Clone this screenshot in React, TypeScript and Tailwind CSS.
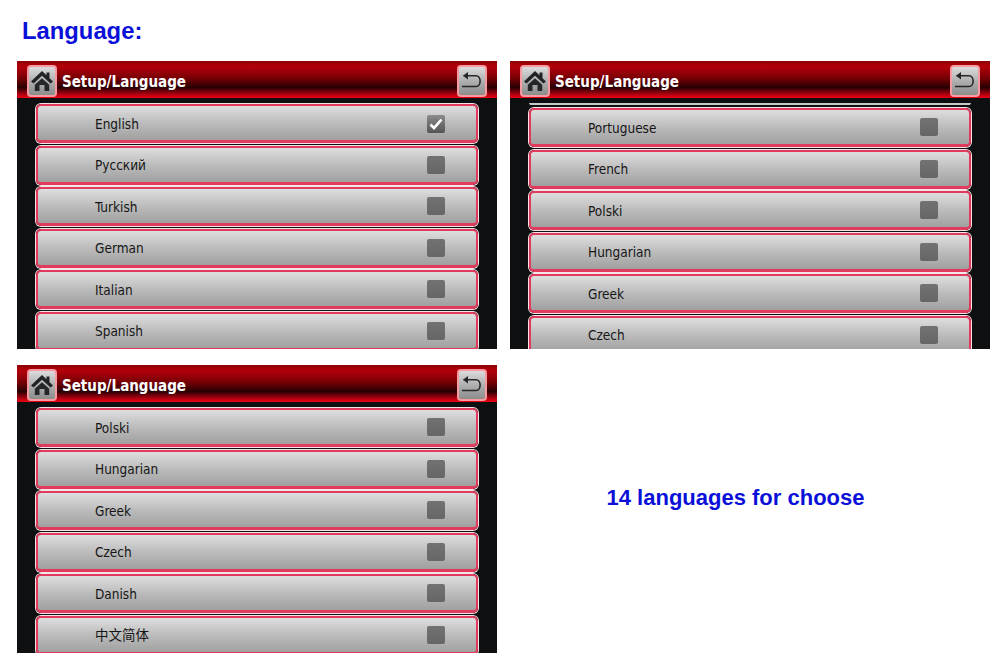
const HomeIcon = () => (
  <svg width="24" height="24" viewBox="0 0 24 24" className="block">
    <path d="M12 2 L1 12.5 L3.5 14.5 L12 6.8 L20.5 14.5 L23 12.5 L19.5 9.2 V3.5 H16.5 V6.3 Z" fill="#1f2326" />
    <path d="M4.8 15.8 L12 9.2 L19.2 15.8 V22 H14.5 V16 H9.5 V22 H4.8 Z" fill="#23272a" />
  </svg>
);

const BackIcon = () => (
  <svg width="24" height="20" viewBox="0 0 24 20" fill="none" stroke="#23272a" className="block">
    <path d="M3.5 4.8 H16 C21.5 4.8 21.5 15.5 16 15.5 H2" strokeWidth="1.6" />
    <path d="M8 1 L3 4.8 L8 8.6 Z" fill="#23272a" stroke="none" />
  </svg>
);

const IconButton = ({ children }: { children: React.ReactNode }) => (
  <div className="mt-[2px] flex h-[32px] w-[30px] shrink-0 items-center justify-center rounded-[4px] border-2 border-[#f79aa2] bg-gradient-to-b from-[#dcdcdc] via-[#b0b0b0] to-[#8c8c8c]">
    {children}
  </div>
);

const Row = ({ label, checked }: { label: string; checked?: boolean }) => (
  <div className="flex h-[39px] shrink-0 items-center rounded-[5px] border-2 border-b-[3px] border-[#e03a5c] bg-gradient-to-b from-[#dedede] via-[#bcbcbc] to-[#a0a0a0] pl-[57px] pr-[31px] text-[13.5px] text-[#161616] shadow-[0_0_0_1px_#f4e4e8] [font-stretch:condensed]">
    <span className="flex-1 pt-[2.5px] leading-none">{label}</span>
    {checked ? (
      <div className="mt-[1px] flex h-[18px] w-[18px] items-center justify-center rounded-[2px] bg-gradient-to-b from-[#8b8b8b] to-[#555555]">
        <svg width="14" height="12" viewBox="0 0 14 12" fill="none" stroke="#ffffff" strokeWidth="2.6" className="block">
          <path d="M1.5 6.5 L5 10 L12.5 1.5" />
        </svg>
      </div>
    ) : (
      <div className="h-[18px] w-[18px] rounded-[2px] bg-gradient-to-b from-[#727272] to-[#666666]" />
    )}
  </div>
);

const Panel = ({ rows, sliver }: { rows: { label: string; checked?: boolean }[]; sliver?: boolean }) => (
  <div className="flex h-[288px] w-[480px] flex-col overflow-hidden bg-[#0e0f10]">
    <div className="flex h-[37px] shrink-0 items-center bg-[linear-gradient(180deg,#8a0005_0%,#b5000a_14%,#7a0005_45%,#280002_72%,#a00010_88%,#f00014_100%)] px-[10px]">
      <IconButton><HomeIcon /></IconButton>
      <span className="ml-[5px] flex-1 pt-[5px] text-[15px] font-bold text-white [font-stretch:condensed]">Setup/Language</span>
      <IconButton><BackIcon /></IconButton>
    </div>
    <div className={`flex flex-col gap-[2.5px] overflow-hidden px-[19px] ${sliver ? "pt-[5px]" : "pt-[6px]"}`}>
      {sliver && <div className="mb-[1px] h-[1.5px] shrink-0 rounded-b-[3px] bg-[#c8c8c8]" />}
      {rows.map((r) => (
        <Row key={r.label} label={r.label} checked={r.checked} />
      ))}
    </div>
  </div>
);

const p1 = [
  { label: "English", checked: true },
  { label: "Русский" },
  { label: "Turkish" },
  { label: "German" },
  { label: "Italian" },
  { label: "Spanish" },
];
const p2 = ["Portuguese", "French", "Polski", "Hungarian", "Greek", "Czech"].map((label) => ({ label }));
const p3 = ["Polski", "Hungarian", "Greek", "Czech", "Danish", "中文简体"].map((label) => ({ label }));

export default function App() {
  return (
    <div className="h-[667px] w-[1000px] overflow-hidden bg-white pl-[17px] font-['DejaVu_Sans','Noto_Sans_CJK_SC',sans-serif]">
      <h1 className="h-[61px] pl-[5px] pt-[17px] font-['Liberation_Sans',sans-serif] text-[23.8px] font-bold leading-[28px] text-[#0a10d8]">
        Language:
      </h1>
      <div className="grid grid-cols-[480px_480px] gap-x-[13px] gap-y-[16px]">
        <Panel rows={p1} />
        <Panel rows={p2} sliver />
        <Panel rows={p3} />
        <div className="flex items-center justify-center pb-[24px] pr-[29px] font-['Liberation_Sans',sans-serif] text-[22px] font-bold text-[#0a10d8]">
          14 languages for choose
        </div>
      </div>
    </div>
  );
}
